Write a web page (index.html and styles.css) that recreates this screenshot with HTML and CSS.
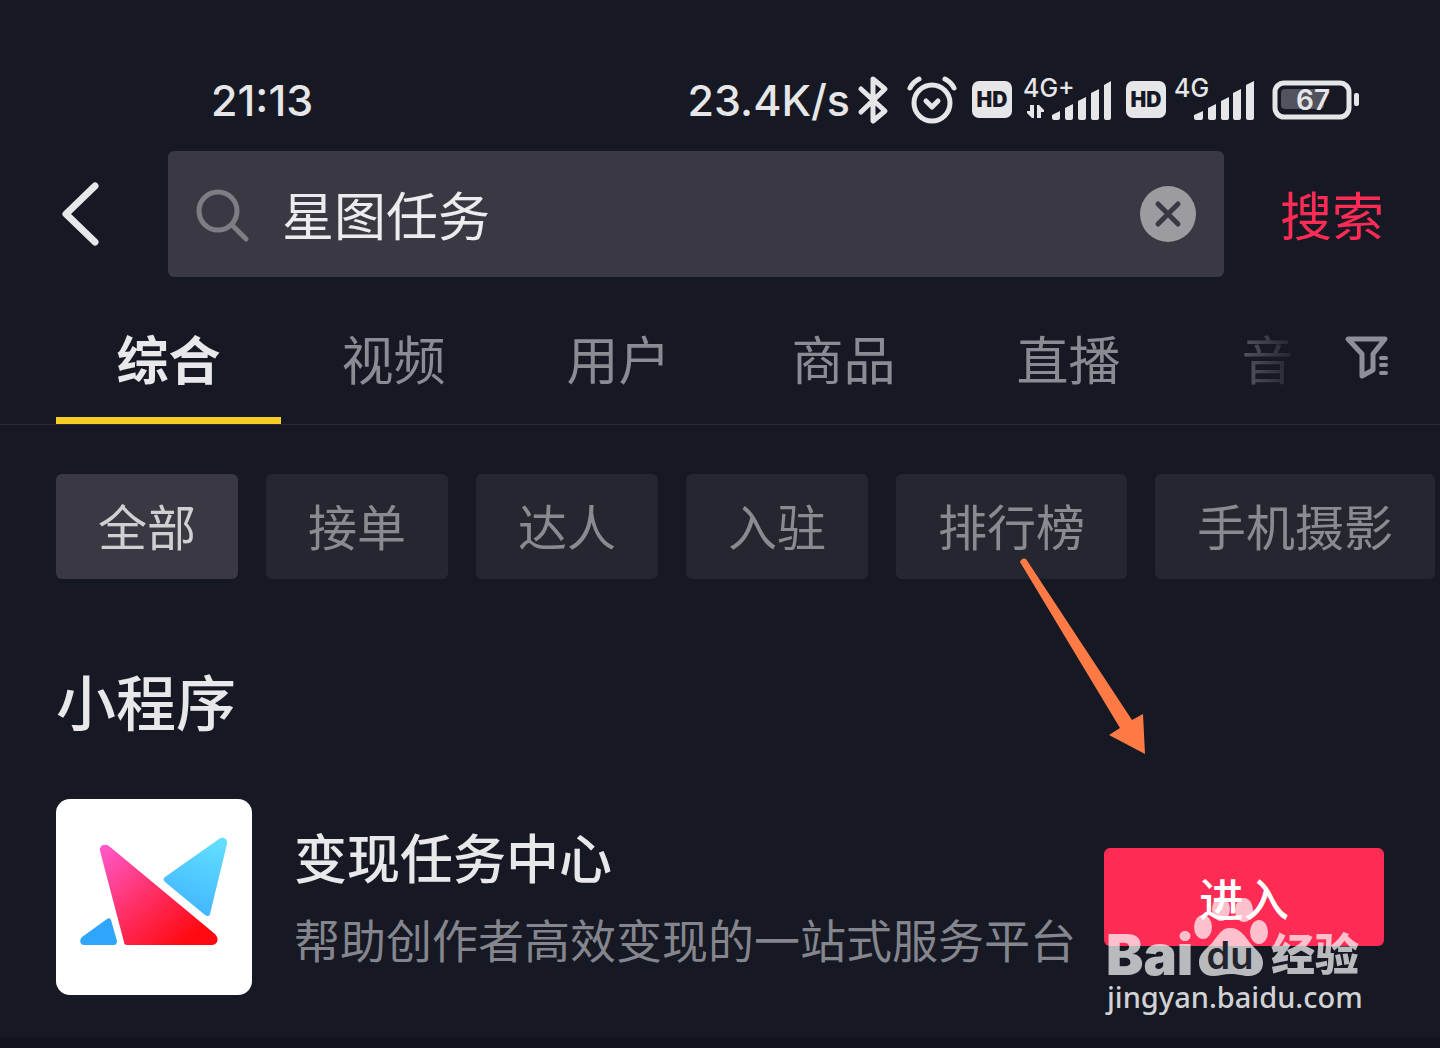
FILE: index.html
```html
<!DOCTYPE html>
<html lang="zh-CN">
<head>
<meta charset="utf-8">
<meta name="viewport" content="width=device-width, initial-scale=1">
<title>星图任务</title>
<link rel="stylesheet" href="styles.css">
</head>
<body>
<div class="page">
  <header class="status">
    <time class="status-text">21:13</time>
    <div class="status-side">
      <span class="status-text">23.4K/s</span>
      <svg class="bluetooth" width="32" height="50" viewBox="0 0 32 50" fill="none" stroke="currentColor" stroke-width="5" stroke-linecap="round" stroke-linejoin="round"><path d="M4 14 28 36 16 46V4L28 14 4 37"/></svg>
      <svg class="alarm" width="50" height="50" viewBox="0 0 50 50" fill="none" stroke="currentColor" stroke-width="5" stroke-linecap="round" stroke-linejoin="round"><circle cx="25" cy="28" r="18"/><path d="M3 13C5 9 8 6 12 4M38 4c4 2 7 5 9 9"/><path d="m19 26 6 6 6-6"/></svg>
      <svg class="hd" width="40" height="50" viewBox="0 0 40 50"><rect y="6" width="40" height="37" rx="7" fill="currentColor"/><text class="hd-text" x="20" y="32" text-anchor="middle">HD</text></svg>
      <svg class="signal" width="88" height="50" viewBox="0 0 88 50" fill="currentColor"><text class="net-text" x="0" y="22">4G+</text><path d="M11 30v13H9l-5-5v-2h3v-6zM14 43V30h2l5 5v2h-3v6z"/><path d="M29 40l8-4v7q0 2-2 2h-4q-2 0-2-2zM42 33l8-4v14q0 2-2 2h-4q-2 0-2-2zM55 26l8-4v21q0 2-2 2h-4q-2 0-2-2zM68 18l8-4v29q0 2-2 2h-4q-2 0-2-2zM81 10l7-4v37q0 2-2 2h-3q-2 0-2-2z"/></svg>
      <svg class="hd" width="40" height="50" viewBox="0 0 40 50"><rect y="6" width="40" height="37" rx="7" fill="currentColor"/><text class="hd-text" x="20" y="32" text-anchor="middle">HD</text></svg>
      <svg class="signal-b" width="80" height="50" viewBox="0 0 80 50" fill="currentColor"><text class="net-text" x="0" y="22">4G</text><path d="M20 40l9-4v7q0 2-2 2h-5q-2 0-2-2zM34 33l8-4v14q0 2-2 2h-4q-2 0-2-2zM47 26l8-4v21q0 2-2 2h-4q-2 0-2-2zM59 18l8-4v29q0 2-2 2h-4q-2 0-2-2zM72 10l8-4v37q0 2-2 2h-4q-2 0-2-2z"/></svg>
      <svg class="battery" width="88" height="50" viewBox="0 0 88 50"><rect x="3" y="8" width="74" height="34" rx="9" fill="none" stroke="currentColor" stroke-width="5"/><rect x="9" y="14" width="43" height="20" rx="4" fill="#53535d"/><rect x="82" y="18" width="5" height="13" rx="2" fill="currentColor"/><text class="battery-text" x="41" y="35" text-anchor="middle">67</text></svg>
    </div>
  </header>

  <form class="search" onsubmit="return false">
    <button class="icon-button back" type="button" aria-label="返回"><svg width="48" height="72" viewBox="0 0 48 72" fill="none" stroke="currentColor" stroke-width="7" stroke-linecap="round" stroke-linejoin="round"><path d="M39 8 10 36l29 28"/></svg></button>
    <div class="search-box">
      <svg width="56" height="56" viewBox="0 0 56 56" fill="none" stroke="#7d7d84" stroke-width="5" stroke-linecap="round"><circle cx="22" cy="25" r="19"/><path d="m36 39 14 14"/></svg>
      <input class="search-input" type="text" value="星图任务" aria-label="搜索内容">
      <button class="icon-button" type="button" aria-label="清除"><svg width="56" height="56" viewBox="0 0 56 56"><circle cx="28" cy="28" r="28" fill="#9b9ba0"/><path d="m18 18 20 20M38 18 18 38" stroke="#3a3943" stroke-width="5" stroke-linecap="round"/></svg></button>
    </div>
    <button class="search-submit" type="submit">搜索</button>
  </form>

  <nav class="tabs">
    <div class="tab-list">
      <button class="tab tab-active" type="button">综合</button>
      <button class="tab" type="button">视频</button>
      <button class="tab" type="button">用户</button>
      <button class="tab" type="button">商品</button>
      <button class="tab" type="button">直播</button>
      <button class="tab" type="button">音乐</button>
    </div>
    <button class="icon-button filter" type="button" aria-label="筛选"><svg width="46" height="46" viewBox="0 0 46 46" fill="none" stroke="#8d8e97" stroke-width="5" stroke-linecap="round" stroke-linejoin="round"><path d="M4 5h37L29 20v16l-11 6V20z"/><path stroke-width="4" d="M37 24h5M37 31h5M37 39h5"/></svg></button>
  </nav>

  <div class="chips">
    <button class="chip chip-active" type="button">全部</button>
    <button class="chip" type="button">接单</button>
    <button class="chip" type="button">达人</button>
    <button class="chip" type="button">入驻</button>
    <button class="chip" type="button">排行榜</button>
    <button class="chip" type="button">手机摄影</button>
  </div>

  <main class="results">
    <h2 class="section-title">小程序</h2>
    <svg class="pointer" width="130" height="200" viewBox="0 0 130 200" fill="#ff7a45"><path d="M3 7q2-5 6-3l106 161 11-6 2 40-36-19 11-7z"/></svg>
    <article class="app">
      <svg class="app-logo" width="196" height="196" viewBox="0 0 196 196">
        <defs>
          <linearGradient id="pink" x1="0" y1="0" x2="1" y2="1"><stop offset="0" stop-color="#ff5bd0"/><stop offset=".45" stop-color="#ff2f66"/><stop offset=".85" stop-color="#ff0a10"/></linearGradient>
          <linearGradient id="sky" x1=".7" y1="0" x2=".4" y2="1"><stop offset="0" stop-color="#62deff"/><stop offset="1" stop-color="#41b4ff"/></linearGradient>
        </defs>
        <rect width="196" height="196" rx="14" fill="#fff"/>
        <path d="M44 52c-1-5 4-8 9-5l106 88c5 5 2 11-3 11H71c-2 0-3-1-3-3z" fill="url(#pink)"/>
        <path d="M163 40c4-3 9 0 8 5l-17 70c0 2-3 3-5 1l-40-33c-2-2-2-4 0-5z" fill="url(#sky)"/>
        <path d="M51 120c2-1 3-1 4 1l6 21c0 2-1 4-3 4H28c-4 0-5-5-2-8z" fill="#2fa6fb"/>
      </svg>
      <div class="app-info">
        <h3 class="app-name">变现任务中心</h3>
        <p class="app-desc">帮助创作者高效变现的一站式服务平台</p>
      </div>
      <button class="enter" type="button">进入</button>
      <svg class="watermark" width="270" height="130" viewBox="0 0 270 130" fill="#fff">
        <g opacity=".7">
          <text class="mark-bai" x="4" y="82">Bai</text>
          <ellipse cx="101" cy="34" rx="9" ry="12"/><ellipse cx="119" cy="16" rx="9" ry="12"/><ellipse cx="142" cy="17" rx="9" ry="12"/><ellipse cx="157" cy="39" rx="9" ry="12"/>
          <path d="M128 35c10 0 15 8 20 15 7 8 13 11 13 20 0 8-6 13-14 13-7 0-11-2-18-2s-12 2-18 2c-9 0-14-6-14-14 0-8 6-12 13-19 6-7 9-15 18-15z"/>
          <text class="mark-cn" x="169" y="78">经验</text>
        </g>
        <text class="mark-du" x="128" y="76" text-anchor="middle">du</text>
        <text class="mark-url" x="5" y="115">jingyan.baidu.com</text>
      </svg>
    </article>
  </main>
</div>
</body>
</html>
```
FILE: styles.css
```css
* {
  box-sizing: border-box;
}

body {
  margin: 0;
  background: #161823;
  color: #e8e8ea;
  font-family: "Noto Sans CJK SC", sans-serif;
}

button {
  margin: 0;
  padding: 0;
  border: 0;
  background: none;
  color: inherit;
  font: inherit;
  white-space: nowrap;
  cursor: pointer;
}

svg {
  display: block;
  flex: none;
  overflow: visible;
}

.page {
  overflow: hidden;
  min-height: 100vh;
  border-bottom: 11px solid #12141d;
}

.icon-button {
  display: flex;
  align-items: center;
  flex: none;
}

/* Status bar */
.status {
  display: flex;
  align-items: center;
  justify-content: space-between;
  height: 151px;
  padding: 48px 80px 0 211px;
  color: #e6e6e8;
  font-family: Inter, sans-serif;
}

.status-side {
  display: flex;
  align-items: center;
}

.status-text {
  font-size: 43px;
  font-weight: 500;
  line-height: 50px;
}

.bluetooth {
  margin-left: 7px;
}

.alarm {
  margin-left: 18px;
}

.hd {
  margin-left: 15px;
}

.signal {
  margin-left: 11px;
}

.signal-b {
  margin-left: 8px;
}

.battery {
  margin-left: 18px;
}

.hd-text {
  fill: #161823;
  font-size: 21px;
  font-weight: 900;
}

.net-text {
  font-size: 25px;
  font-weight: 500;
}

.battery-text {
  fill: currentColor;
  font-size: 28px;
  font-weight: 600;
}

/* Search */
.search {
  display: flex;
  align-items: center;
  padding: 0 56px;
}

.back {
  width: 112px;
  height: 126px;
}

.search-box {
  display: flex;
  align-items: center;
  flex: 1;
  min-width: 0;
  height: 126px;
  padding: 0 28px;
  border-radius: 6px;
  background: #3a3943;
}

.search-input {
  flex: 1;
  min-width: 0;
  margin: 0 30px;
  padding: 0;
  border: 0;
  outline: 0;
  background: none;
  color: #ececee;
  font: 52px/76px "Noto Sans CJK SC", sans-serif;
}

.search-submit {
  margin-left: 56px;
  color: #fe2c55;
  font-size: 52px;
  line-height: 76px;
}

/* Tabs */
.tabs {
  display: flex;
  padding: 20px 50px 0 56px;
  border-bottom: 1px solid #292b35;
}

.tab-list {
  display: flex;
  flex: 1;
  min-width: 0;
  overflow: hidden;
  margin-right: 50px;
  mask-image: linear-gradient(to left, rgba(0, 0, 0, 0.1), #000 110px);
}

.tab {
  flex: 0 0 225px;
  height: 127px;
  padding-top: 1px;
  border-bottom: 7px solid transparent;
  color: #8a8b93;
  font-size: 52px;
  line-height: 76px;
}

.tab-active {
  border-color: #f8ce24;
  color: #e8e8ea;
  font-weight: 700;
}

.filter {
  height: 120px;
}

/* Filter chips */
.chips {
  display: flex;
  gap: 28px;
  overflow: hidden;
  padding: 49px 0 0 56px;
}

.chip {
  flex: none;
  height: 105px;
  padding: 0 42px 4px;
  border-radius: 6px;
  background: #242730;
  color: #8a8b91;
  font-size: 49px;
  line-height: 72px;
}

.chip-active {
  background: #3a3943;
  color: #d0d0d3;
}

/* Results */
.results {
  position: relative;
  padding: 73px 56px 42px;
}

.section-title {
  margin: 0 0 51px;
  font-size: 60px;
  font-weight: 500;
  line-height: 96px;
}

.pointer {
  position: absolute;
  top: -24px;
  right: 293px;
}

.app {
  position: relative;
  display: flex;
  align-items: center;
}

.app-info {
  flex: 1;
  min-width: 0;
  margin-left: 42px;
  padding-bottom: 2px;
}

.app-name,
.app-desc {
  margin: 0;
  white-space: nowrap;
}

.app-name {
  font-size: 53px;
  font-weight: 500;
  line-height: 84px;
}

.app-desc {
  color: #84858d;
  font-size: 46px;
  line-height: 80px;
}

.enter {
  flex: none;
  width: 280px;
  height: 98px;
  border-radius: 6px;
  background: #fe2c55;
  color: #fff;
  font-size: 45px;
  font-weight: 500;
}

.watermark {
  position: absolute;
  top: 94px;
  right: 12px;
}

.mark-bai {
  font: 900 56px Inter, sans-serif;
}

.mark-cn {
  font: 900 44px "Noto Sans CJK SC", sans-serif;
}

.mark-du {
  fill: #22232d;
  font: 600 38px Inter, sans-serif;
}

.mark-url {
  fill: #d2d2d4;
  font: 500 29px "Noto Sans", sans-serif;
}
```
